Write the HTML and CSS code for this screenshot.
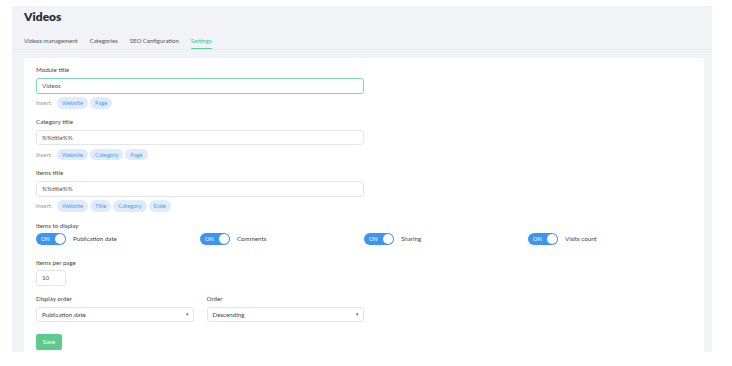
FILE: index.html
```html
<!DOCTYPE html>
<html lang="en">
<head>
    <meta charset="UTF-8">
    <meta name="viewport" content="width=device-width, initial-scale=1.0">
    <title>Videos - Settings</title>
    <link rel="stylesheet" href="styles.css">
</head>
<body>
    <div class="page">
        <div class="header">
            <h1>Videos</h1>
            <nav class="tabs">
                <a class="tab">Videos management</a>
                <a class="tab">Categories</a>
                <a class="tab">SEO Configuration</a>
                <a class="tab active">Settings</a>
            </nav>
        </div>

        <div class="card">
            <form class="settings-form">
                <div class="field">
                    <label for="moduleTitle">Module title</label>
                    <input type="text" id="moduleTitle" class="text-input focused" value="Videos">
                    <div class="insert">
                        <span class="insert-label">Insert:</span>
                        <span class="chip">Website</span>
                        <span class="chip">Page</span>
                    </div>
                </div>

                <div class="field">
                    <label for="categoryTitle">Category title</label>
                    <input type="text" id="categoryTitle" class="text-input" value="%%title%%">
                    <div class="insert">
                        <span class="insert-label">Insert:</span>
                        <span class="chip">Website</span>
                        <span class="chip">Category</span>
                        <span class="chip">Page</span>
                    </div>
                </div>

                <div class="field">
                    <label for="itemsTitle">Items title</label>
                    <input type="text" id="itemsTitle" class="text-input" value="%%title%%">
                    <div class="insert">
                        <span class="insert-label">Insert:</span>
                        <span class="chip">Website</span>
                        <span class="chip">Title</span>
                        <span class="chip">Category</span>
                        <span class="chip">Date</span>
                    </div>
                </div>

                <div class="field field-toggles">
                    <label>Items to display</label>
                    <div class="toggles">
                        <div class="toggle-item"><span class="toggle">ON<span class="knob"></span></span>Publication date</div>
                        <div class="toggle-item"><span class="toggle">ON<span class="knob"></span></span>Comments</div>
                        <div class="toggle-item"><span class="toggle">ON<span class="knob"></span></span>Sharing</div>
                        <div class="toggle-item"><span class="toggle">ON<span class="knob"></span></span>Visits count</div>
                    </div>
                </div>

                <div class="field field-perpage">
                    <label for="perPage">Items per page</label>
                    <input type="text" id="perPage" class="text-input small" value="10">
                </div>

                <div class="field-row">
                    <div class="field-col">
                        <label>Display order</label>
                        <div class="select">Publication date<span class="caret">&#9662;</span></div>
                    </div>
                    <div class="field-col">
                        <label>Order</label>
                        <div class="select">Descending<span class="caret">&#9662;</span></div>
                    </div>
                </div>

                <button type="submit" class="save">Save</button>
            </form>
        </div>
    </div>
</body>
</html>
```

FILE: styles.css
```css
* {
    box-sizing: border-box;
    margin: 0;
    padding: 0;
}

body {
    font-family: 'Lato', 'Noto Sans', sans-serif;
    background-color: #fff;
    color: #444;
}

.page {
    width: 700px;
    height: 346px;
    margin: 6px 0 0 12px;
    background-color: #f2f3f7;
    overflow: hidden;
}

.header {
    padding: 3px 12px 0;
    border-bottom: 1px solid #eaebf0;
}

h1 {
    font-size: 12px;
    font-weight: 800;
    color: #2b2d33;
    line-height: 16px;
    margin-bottom: 11px;
}

.tabs {
    display: flex;
    gap: 12px;
}

.tab {
    font-size: 6px;
    color: #555;
    padding-bottom: 3px;
    border-bottom: 1px solid transparent;
    line-height: 9px;
}

.tab.active {
    color: #3fbf8f;
    border-bottom-color: #5ccfa3;
}

.card {
    margin: 8px 8px 0 12px;
    padding: 7px 12px 0;
    background-color: #fff;
    border-radius: 2px;
    height: 300px;
}

.settings-form {
    width: 656px;
}

.field {
    width: 328px;
    margin-bottom: 8px;
}

label {
    display: block;
    font-size: 6.2px;
    line-height: 10px;
    color: #444;
    margin-bottom: 3px;
}

.text-input {
    display: block;
    width: 100%;
    height: 15.5px;
    padding: 0 5px;
    font-family: inherit;
    font-size: 6.2px;
    color: #555;
    border: 1px solid #e3e5ea;
    border-radius: 3px;
    background: #fff;
    outline: none;
}

.text-input.focused {
    border-color: #7fd8b4;
}

.text-input.small {
    width: 30px;
}

.insert {
    display: flex;
    align-items: center;
    gap: 2px;
    margin-top: 3.5px;
}

.insert-label {
    font-size: 5.8px;
    color: #999;
    margin-right: 3px;
}

.chip {
    font-size: 5.8px;
    line-height: 11.5px;
    padding: 0 5px;
    color: #4d9ef2;
    background-color: #ddebfa;
    border-radius: 6px;
}

.field-toggles {
    width: 656px;
    margin-top: 9.5px;
    margin-bottom: 13.5px;
}

.toggles {
    display: grid;
    grid-template-columns: repeat(4, 1fr);
    margin-top: -1.5px;
}

.toggle-item {
    display: flex;
    align-items: center;
    gap: 7px;
    font-size: 6.2px;
    color: #444;
}

.toggle {
    position: relative;
    width: 30px;
    height: 12px;
    border-radius: 6px;
    background-color: #3d94f5;
    color: #fff;
    font-size: 5.5px;
    line-height: 12px;
    padding-left: 5px;
}

.knob {
    position: absolute;
    right: 1px;
    top: 1px;
    width: 10px;
    height: 10px;
    border-radius: 50%;
    background-color: #fff;
}

.field-perpage {
    margin-bottom: 8.5px;
}

.field-perpage label {
    margin-bottom: 2px;
}

.field-row {
    display: flex;
    gap: 13px;
    width: 328px;
}

.field-col {
    flex: 1;
}

.field-col label {
    margin-bottom: 2.5px;
}

.select {
    position: relative;
    height: 15.5px;
    padding: 0 5px;
    font-size: 6.2px;
    line-height: 13.5px;
    color: #444;
    border: 1px solid #e3e5ea;
    border-radius: 3px;
}

.caret {
    position: absolute;
    right: 4px;
    top: 0;
    font-size: 5px;
    color: #666;
}

.save {
    margin-top: 11.5px;
    width: 26px;
    height: 16px;
    border: none;
    border-radius: 2px;
    background-color: #5ecb8d;
    color: #fff;
    font-family: inherit;
    font-size: 6px;
}
```
